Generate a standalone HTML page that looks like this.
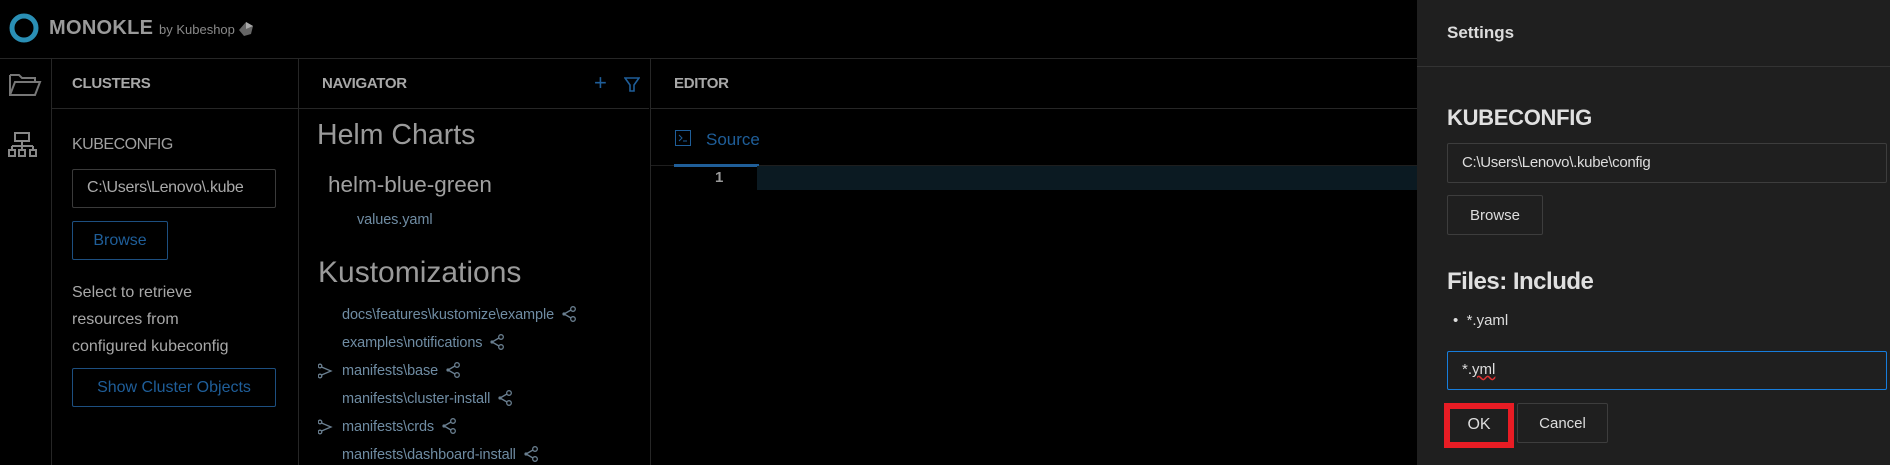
<!DOCTYPE html>
<html><head><meta charset="utf-8"><style>
*{box-sizing:border-box;margin:0;padding:0}
body{width:1890px;height:465px;background:#000;overflow:hidden;position:relative;font-family:"Liberation Sans",sans-serif;color:#b0b0b0}
.a{position:absolute;white-space:nowrap}
.line{position:absolute;background:#262626}
.hd{font-size:15px;font-weight:bold;color:#a8a8a8;letter-spacing:-0.3px}
.nav{font-size:14.5px;color:#6f8ca3;letter-spacing:-0.1px}
.nav svg{vertical-align:-3px;margin-left:7px}
</style></head><body>
<svg width="0" height="0" style="position:absolute"><defs><g id="sh"><circle cx="12" cy="3" r="2.3" fill="none" stroke="#6a7f90" stroke-width="1.3"/><circle cx="12" cy="13" r="2.3" fill="none" stroke="#6a7f90" stroke-width="1.3"/><circle cx="3" cy="8" r="1.6" fill="#6a7f90"/><path d="M3 8 L10 4 M3 8 L10 12" stroke="#6a7f90" stroke-width="1.3"/></g><g id="ch"><circle cx="2" cy="3" r="1.8" fill="none" stroke="#6a7f90" stroke-width="1.3"/><circle cx="2" cy="13" r="1.8" fill="none" stroke="#6a7f90" stroke-width="1.3"/><path d="M3.5 4 L13 8 L3.5 12" fill="none" stroke="#6a7f90" stroke-width="1.3"/></g></defs></svg>
<!-- header -->
<svg class="a" style="left:9px;top:13px" width="30" height="30"><circle cx="15" cy="15" r="12" fill="none" stroke="#2a8fb5" stroke-width="5"/></svg>
<div class="a" style="left:49px;top:17px;font-size:20px;font-weight:bold;color:#9a9a9a;letter-spacing:0.3px">MONOKLE</div>
<div class="a" style="left:159px;top:22px;font-size:13px;color:#8a8a8a">by Kubeshop</div>
<svg class="a" style="left:238px;top:21px" width="16" height="16"><path d="M8 1 L15 5 L13 13 L6 15 L1 9 Z" fill="#666"/><path d="M8 1 L15 5 L8 8 Z" fill="#aaa"/></svg>
<div class="line" style="left:0;top:58px;width:1417px;height:1px"></div>
<!-- icon bar -->
<div class="line" style="left:51px;top:59px;width:1px;height:406px"></div>
<svg class="a" style="left:8px;top:72px" width="34" height="26"><path d="M2 3 H11 L14 6 H27 V10 M2 3 V23 H27 L32 10 H7 L2 23" fill="none" stroke="#777" stroke-width="2"/></svg>
<svg class="a" style="left:8px;top:131px" width="30" height="28"><g fill="none" stroke="#888" stroke-width="2"><rect x="7" y="2" width="14" height="8"/><path d="M14 10 V15 M4 15 H25 M4 15 V19 M14 15 V19 M25 15 V19"/><rect x="1" y="19" width="6" height="6"/><rect x="11" y="19" width="6" height="6"/><rect x="22" y="19" width="6" height="6"/></g></svg>
<!-- clusters -->
<div class="line" style="left:298px;top:59px;width:1px;height:406px"></div>
<div class="a hd" style="left:72px;top:75px">CLUSTERS</div>
<div class="line" style="left:52px;top:108px;width:246px;height:1px"></div>
<div class="a" style="left:72px;top:136px;font-size:16px;color:#a0a0a0;letter-spacing:-0.5px">KUBECONFIG</div>
<div class="a" style="left:72px;top:169px;width:204px;height:39px;border:1px solid #3a3a3a;border-radius:2px;padding:9px 0 0 14px;font-size:16px;color:#aaa;letter-spacing:-0.3px;overflow:hidden">C:\Users\Lenovo\.kube</div>
<div class="a" style="left:72px;top:221px;width:96px;height:39px;border:1px solid #1d4f80;border-radius:2px;text-align:center;padding-top:10px;font-size:16px;color:#1f5e99">Browse</div>
<div class="a" style="left:72px;top:279px;font-size:16px;line-height:27px;color:#a8a8a8">Select to retrieve<br>resources from<br>configured kubeconfig</div>
<div class="a" style="left:72px;top:368px;width:204px;height:39px;border:1px solid #1d4f80;border-radius:2px;text-align:center;padding-top:10px;font-size:16px;color:#1f5e99">Show Cluster Objects</div>
<!-- navigator -->
<div class="line" style="left:650px;top:59px;width:1px;height:406px"></div>
<div class="a hd" style="left:322px;top:75px">NAVIGATOR</div>
<div class="a" style="left:594px;top:70px;font-size:22px;color:#1f5e99">+</div>
<svg class="a" style="left:624px;top:76px" width="16" height="16"><path d="M1 2 H15 L10 9 V15 H6 V9 Z" fill="none" stroke="#1f5e99" stroke-width="1.6"/></svg>
<div class="line" style="left:299px;top:108px;width:350px;height:1px"></div>
<div class="a" style="left:317px;top:119px;font-size:28.5px;color:#9a9a9a">Helm Charts</div>
<div class="a" style="left:328px;top:172px;font-size:22.5px;color:#a0a0a0">helm-blue-green</div>
<div class="a nav" style="left:357px;top:212px">values.yaml</div>
<div class="a" style="left:318px;top:256px;font-size:30px;color:#9a9a9a">Kustomizations</div>
<div class="a nav" style="left:342px;top:306px">docs\features\kustomize\example<svg width="16" height="16"><use href="#sh"/></svg></div>
<div class="a nav" style="left:342px;top:334px">examples\notifications<svg width="16" height="16"><use href="#sh"/></svg></div>
<svg class="a" style="left:318px;top:363px" width="16" height="16"><use href="#ch"/></svg><div class="a nav" style="left:342px;top:362px">manifests\base<svg width="16" height="16"><use href="#sh"/></svg></div>
<div class="a nav" style="left:342px;top:390px">manifests\cluster-install<svg width="16" height="16"><use href="#sh"/></svg></div>
<svg class="a" style="left:318px;top:419px" width="16" height="16"><use href="#ch"/></svg><div class="a nav" style="left:342px;top:418px">manifests\crds<svg width="16" height="16"><use href="#sh"/></svg></div>
<div class="a nav" style="left:342px;top:446px">manifests\dashboard-install<svg width="16" height="16"><use href="#sh"/></svg></div>
<!-- editor -->
<div class="a hd" style="left:674px;top:75px">EDITOR</div>
<div class="line" style="left:651px;top:108px;width:766px;height:1px"></div>
<svg class="a" style="left:675px;top:130px" width="16" height="16"><rect x="0.5" y="0.5" width="15" height="15" fill="none" stroke="#1f5e99"/><path d="M4 5 L7 8 L4 11 M8 11 H12" stroke="#1f5e99" fill="none"/></svg>
<div class="a" style="left:706px;top:130px;font-size:17px;color:#1f5e99">Source</div>
<div class="line" style="left:651px;top:165px;width:766px;height:1px;background:#1e1e1e"></div>
<div class="a" style="left:674px;top:164px;width:85px;height:3px;background:#1f5e99"></div>
<div class="a" style="left:757px;top:166px;width:660px;height:24px;background:#0b1a22"></div>
<div class="a" style="left:715px;top:169px;font-size:15px;font-weight:bold;color:#999">1</div>
<!-- drawer -->
<div class="a" style="left:1417px;top:0;width:473px;height:465px;background:#1f1f1f"></div>
<div class="a" style="left:1447px;top:23px;font-size:17px;font-weight:bold;color:#dcdcdc">Settings</div>
<div class="line" style="left:1417px;top:66px;width:473px;height:1px;background:#333"></div>
<div class="a" style="left:1447px;top:105px;font-size:22px;font-weight:bold;color:#e0e0e0;letter-spacing:-0.3px">KUBECONFIG</div>
<div class="a" style="left:1447px;top:143px;width:440px;height:40px;border:1px solid #3d3d3d;border-radius:2px;padding:10px 0 0 14px;font-size:15px;color:#ddd;letter-spacing:-0.3px">C:\Users\Lenovo\.kube\config</div>
<div class="a" style="left:1447px;top:195px;width:96px;height:40px;border:1px solid #3d3d3d;border-radius:2px;text-align:center;padding-top:11px;font-size:15px;color:#ddd">Browse</div>
<div class="a" style="left:1447px;top:268px;font-size:24px;font-weight:bold;color:#e0e0e0;letter-spacing:-0.5px">Files: Include</div>
<div class="a" style="left:1453px;top:312px;font-size:15px;color:#ddd">•&nbsp;&nbsp;*.yaml</div>
<div class="a" style="left:1447px;top:351px;width:440px;height:39px;border:1px solid #177ddc;border-radius:2px;padding:9px 0 0 14px;font-size:15px;color:#ddd">*.<span style="text-decoration:underline wavy #d33">yml</span></div>
<div class="a" style="left:1444px;top:403px;width:70px;height:45px;border:6px solid #e81c24;background:#1f1f1f;text-align:center;padding-top:7px;font-size:16px;color:#ddd">OK</div>
<div class="a" style="left:1517px;top:403px;width:91px;height:40px;border:1px solid #3d3d3d;border-radius:2px;text-align:center;padding-top:11px;font-size:15px;color:#ddd">Cancel</div>
</body></html>
